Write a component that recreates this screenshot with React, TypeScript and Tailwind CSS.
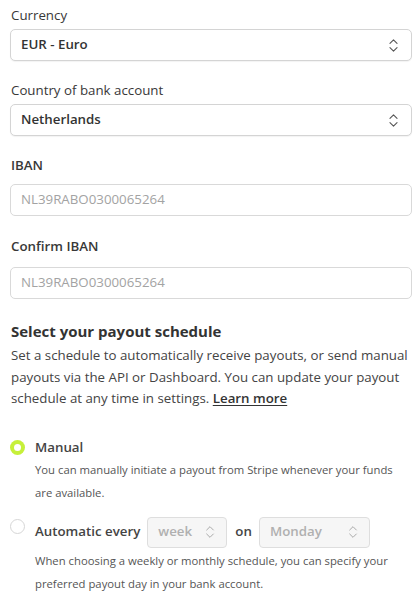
import { ChevronsUpDown } from "lucide-react";

const font = { fontFamily: '"Open Sans", "Noto Sans", sans-serif' };

const SelectBox = ({ value }: { value: string }) => (
  <div className="flex h-8 items-center justify-between rounded-[5px] border border-[#d4d4d4] bg-white pl-[10px] pr-[9px] shadow-[0_1px_1px_rgba(0,0,0,0.05)]">
    <span className="text-[13.3px] font-semibold text-[#333]">{value}</span>
    <ChevronsUpDown className="h-[17px] w-[17px] text-[#555]" strokeWidth={1.5} />
  </div>
);

const TextBox = ({ placeholder }: { placeholder: string }) => (
  <div className="flex h-8 items-center rounded-[5px] border border-[#d9d9d9] bg-white px-[10px]">
    <span className="text-[13.3px] text-[#a3a3a3]">{placeholder}</span>
  </div>
);

const MiniSelect = ({ value, width }: { value: string; width: string }) => (
  <div
    className={`flex h-[31px] items-center justify-between rounded-[4px] border border-[#dedede] bg-[#f6f6f6] pl-[10px] pr-[8px] ${width}`}
  >
    <span className="text-[13.3px] font-semibold text-[#b0b0b0]">{value}</span>
    <ChevronsUpDown className="h-[16px] w-[16px] text-[#aaa]" strokeWidth={1.5} />
  </div>
);

export default function App() {
  return (
    <div className="min-h-[606px] w-[413px] bg-white pl-[10px] pr-[1px] pt-[5px] text-[#333]" style={font}>
      <label className="block pl-[1px] text-[13.3px] leading-5 text-[#383838]">Currency</label>
      <div className="mt-[4px]">
        <SelectBox value="EUR - Euro" />
      </div>

      <label className="mt-[19px] block pl-[1px] text-[13.3px] leading-5 text-[#383838]">Country of bank account</label>
      <div className="mt-[4px]">
        <SelectBox value="Netherlands" />
      </div>

      <label className="mt-[19px] block pl-[1px] text-[13.3px] font-semibold leading-5 text-[#383838]">IBAN</label>
      <div className="mt-[9px]">
        <TextBox placeholder="NL39RABO0300065264" />
      </div>

      <label className="mt-[20px] block pl-[1px] text-[13.3px] font-semibold leading-5 text-[#383838]">Confirm IBAN</label>
      <div className="mt-[11px]">
        <TextBox placeholder="NL39RABO0300065264" />
      </div>

      <h2 className="mt-[21px] pl-[1px] text-[15px] font-bold leading-[22px] text-[#333]">Select your payout schedule</h2>
      <p className="mt-[3px] pl-[1px] pr-[4px] text-[13.3px] leading-[21.5px] text-[#444]">
        Set a schedule to automatically receive payouts, or send manual payouts via the API or Dashboard. You can update your payout schedule at any time in settings.{" "}
        <a className="font-semibold text-[#333] underline decoration-1 underline-offset-[2px]">Learn more</a>
      </p>

      <div className="mt-[27px] flex items-start">
        <div className="mt-[3px] flex h-[15px] w-[15px] shrink-0 items-center justify-center rounded-full bg-[#c6f03a]">
          <div className="h-[7px] w-[7px] rounded-full bg-white" />
        </div>
        <div className="ml-[10px]">
          <div className="text-[13.3px] font-semibold leading-5 text-[#444]">Manual</div>
          <p className="mt-[1px] text-[11.3px] leading-[23px] text-[#555]">
            You can manually initiate a payout from Stripe whenever your funds are available.
          </p>
        </div>
      </div>

      <div className="mt-[13px] flex items-start">
        <div className="mt-[2px] h-[15px] w-[15px] shrink-0 rounded-full border border-[#d6d6d6] bg-white" />
        <div className="ml-[10px]">
          <div className="flex items-center">
            <span className="text-[13.3px] font-semibold text-[#444]">Automatic every</span>
            <div className="ml-[7px]">
              <MiniSelect value="week" width="w-[80px]" />
            </div>
            <span className="ml-[8px] text-[13.3px] font-semibold text-[#444]">on</span>
            <div className="ml-[7px]">
              <MiniSelect value="Monday" width="w-[111px]" />
            </div>
          </div>
          <p className="mt-[1px] text-[11.3px] leading-[23px] text-[#555]">
            When choosing a weekly or monthly schedule, you can specify your preferred payout day in your bank account.
          </p>
        </div>
      </div>
    </div>
  );
}
